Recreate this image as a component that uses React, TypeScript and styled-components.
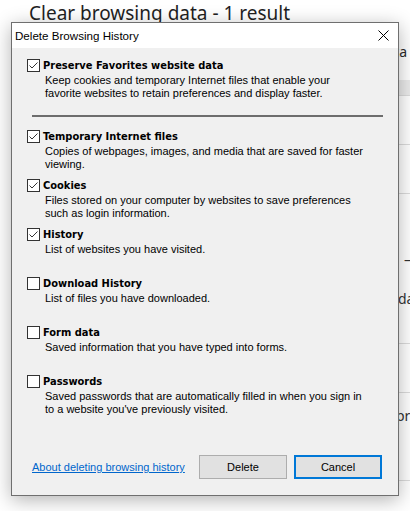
import React from "react";
import styled, { createGlobalStyle } from "styled-components";

const GlobalStyle = createGlobalStyle`
  html, body { margin: 0; padding: 0; background: #ffffff; }
  body { font-family: "Liberation Sans", Arial, sans-serif; overflow: hidden; }
  * { box-sizing: border-box; }
`;

const Page = styled.div`
  position: relative;
  width: 410px;
  height: 511px;
  overflow: hidden;
  background: #ffffff;
`;

/* ---------- page underneath the dialog ---------- */
const Backdrop = styled.div`
  display: flex;
  flex-direction: column;
  font-family: "Noto Sans", sans-serif;
  color: #333333;
`;

const Heading = styled.h1`
  margin: 0;
  padding-left: 29px;
  font-family: "Noto Sans", sans-serif;
  font-weight: 400;
  font-size: 19px;
  line-height: 26px;
  color: #1f1f1f;
  white-space: nowrap;
`;

const SubLine = styled.div`
  margin-top: 16px;
  padding-right: 3px;
  font-size: 14px;
  line-height: 20px;
  text-align: right;
  white-space: nowrap;
  color: #2b2b2b;
`;

const List = styled.div`
  margin-left: 29px;
  display: flex;
  flex-direction: column;
`;

const Band = styled.div`
  margin-top: 18px;
  height: 15px;
  background: #ebebeb;
`;

const BgRow = styled.div<{ $h: number; $pad?: number }>`
  height: ${(p) => p.$h}px;
  border-top: 1px solid #dcdcdc;
  padding-top: ${(p) => p.$pad ?? 0}px;
  display: flex;
  flex-direction: column;
`;

const Peek = styled.div<{ $indent: number; $gap?: number }>`
  padding-left: ${(p) => p.$indent}px;
  margin-top: ${(p) => p.$gap ?? 0}px;
  font-size: 14px;
  line-height: 20px;
  white-space: nowrap;
`;

/* ---------- dialog ---------- */
const Dialog = styled.div`
  position: absolute;
  left: 11px;
  top: 22px;
  width: 388px;
  height: 474px;
  display: flex;
  flex-direction: column;
  border: 1px solid #6f6f6f;
  background: #f0f0f0;
  box-shadow: 0 4px 18px rgba(0, 0, 0, 0.3);
`;

const TitleBar = styled.div`
  height: 25px;
  display: flex;
  align-items: center;
  background: #ffffff;
  padding-left: 3px;
`;

const Title = styled.div`
  flex: 1;
  font-family: "Liberation Sans", Arial, sans-serif;
  font-size: 11.6px;
  color: #000000;
  white-space: nowrap;
`;

const CloseButton = styled.div`
  width: 30px;
  height: 25px;
  display: flex;
  align-items: center;
  justify-content: center;
`;

const Body = styled.div`
  flex: 1;
  padding: 11px 15px 0 15px;
  display: flex;
  flex-direction: column;
`;

const OptionBox = styled.div<{ $h?: number }>`
  display: flex;
  flex-direction: column;
  height: ${(p) => (p.$h ? `${p.$h}px` : "auto")};
`;

const OptionHead = styled.label`
  display: flex;
  align-items: center;
  gap: 3px;
  height: 13px;
`;

const Check = styled.span`
  width: 13px;
  height: 13px;
  flex: none;
  border: 1px solid #333333;
  background: #ffffff;
  display: flex;
  align-items: center;
  justify-content: center;
`;

const Label = styled.span`
  font-family: "DejaVu Sans Condensed", "DejaVu Sans", sans-serif;
  font-weight: 700;
  font-size: 11px;
  line-height: 13px;
  color: #000000;
  white-space: nowrap;
`;

const Desc = styled.div`
  margin-top: 2px;
  padding-left: 18px;
  font-family: "Liberation Sans", Arial, sans-serif;
  font-size: 11px;
  line-height: 13px;
  color: #000000;
`;

const DescLine = styled.div`
  white-space: nowrap;
`;

const Separator = styled.div`
  margin: 15px 0 13px 5px;
  height: 2px;
  background: #6d6d6d;
`;

const Footer = styled.div`
  display: flex;
  align-items: center;
  padding: 0 16px 16px 20px;
`;

const HelpLink = styled.a`
  font-family: "Liberation Sans", Arial, sans-serif;
  font-size: 11px;
  color: #0066cc;
  text-decoration: underline;
  white-space: nowrap;
  cursor: pointer;
`;

const Buttons = styled.div`
  margin-left: auto;
  display: flex;
  gap: 7px;
`;

const Button = styled.button<{ $primary?: boolean }>`
  width: 88px;
  height: 24px;
  padding: 0;
  background: #e1e1e1;
  border: ${(p) => (p.$primary ? "2px solid #0078d7" : "1px solid #adadad")};
  font-family: "Liberation Sans", Arial, sans-serif;
  font-size: 11px;
  color: #000000;
  display: flex;
  align-items: center;
  justify-content: center;
`;

const CheckMark = () => (
  <svg width="11" height="11" viewBox="0 0 11 11">
    <polyline points="1.5,5.5 4,8 9.5,2.5" fill="none" stroke="#333333" strokeWidth="1" />
  </svg>
);

const CloseIcon = () => (
  <svg width="11" height="11" viewBox="0 0 11 11">
    <path d="M0.5 0.5 L10.5 10.5 M10.5 0.5 L0.5 10.5" stroke="#000000" strokeWidth="1" fill="none" />
  </svg>
);

type Opt = { label: string; desc: string[]; checked: boolean };

const options: Opt[] = [
  {
    label: "Temporary Internet files",
    desc: ["Copies of webpages, images, and media that are saved for faster", "viewing."],
    checked: true,
  },
  {
    label: "Cookies",
    desc: ["Files stored on your computer by websites to save preferences", "such as login information."],
    checked: true,
  },
  { label: "History", desc: ["List of websites you have visited."], checked: true },
  { label: "Download History", desc: ["List of files you have downloaded."], checked: false },
  { label: "Form data", desc: ["Saved information that you have typed into forms."], checked: false },
  {
    label: "Passwords",
    desc: ["Saved passwords that are automatically filled in when you sign in", "to a website you've previously visited."],
    checked: false,
  },
];

const Option = ({ opt, h }: { opt: Opt; h?: number }) => (
  <OptionBox $h={h}>
    <OptionHead>
      <Check>{opt.checked && <CheckMark />}</Check>
      <Label>{opt.label}</Label>
    </OptionHead>
    <Desc>
      {opt.desc.map((l) => (
        <DescLine key={l}>{l}</DescLine>
      ))}
    </Desc>
  </OptionBox>
);

export default function App() {
  return (
    <>
      <GlobalStyle />
      <Page>
        <Backdrop>
          <Heading>Clear browsing data - 1 result</Heading>
          <SubLine>Choose what to clear from your browsing data</SubLine>
          <List>
            <Band />
            <BgRow $h={49} />
            <BgRow $h={49} />
            <BgRow $h={150} $pad={56}>
              <Peek $indent={375}>– time</Peek>
              <Peek $indent={369} $gap={19}>data</Peek>
            </BgRow>
            <BgRow $h={49} />
            <BgRow $h={88} $pad={13}>
              <Peek $indent={367}>profile</Peek>
            </BgRow>
            <BgRow $h={40} />
          </List>
        </Backdrop>

        <Dialog role="dialog" aria-label="Delete Browsing History">
          <TitleBar>
            <Title>Delete Browsing History</Title>
            <CloseButton>
              <CloseIcon />
            </CloseButton>
          </TitleBar>
          <Body>
            <Option
              opt={{
                label: "Preserve Favorites website data",
                desc: [
                  "Keep cookies and temporary Internet files that enable your",
                  "favorite websites to retain preferences and display faster.",
                ],
                checked: true,
              }}
            />
            <Separator />
            {options.map((o) => (
              <Option key={o.label} opt={o} h={49} />
            ))}
          </Body>
          <Footer>
            <HelpLink>About deleting browsing history</HelpLink>
            <Buttons>
              <Button>Delete</Button>
              <Button $primary>Cancel</Button>
            </Buttons>
          </Footer>
        </Dialog>
      </Page>
    </>
  );
}
